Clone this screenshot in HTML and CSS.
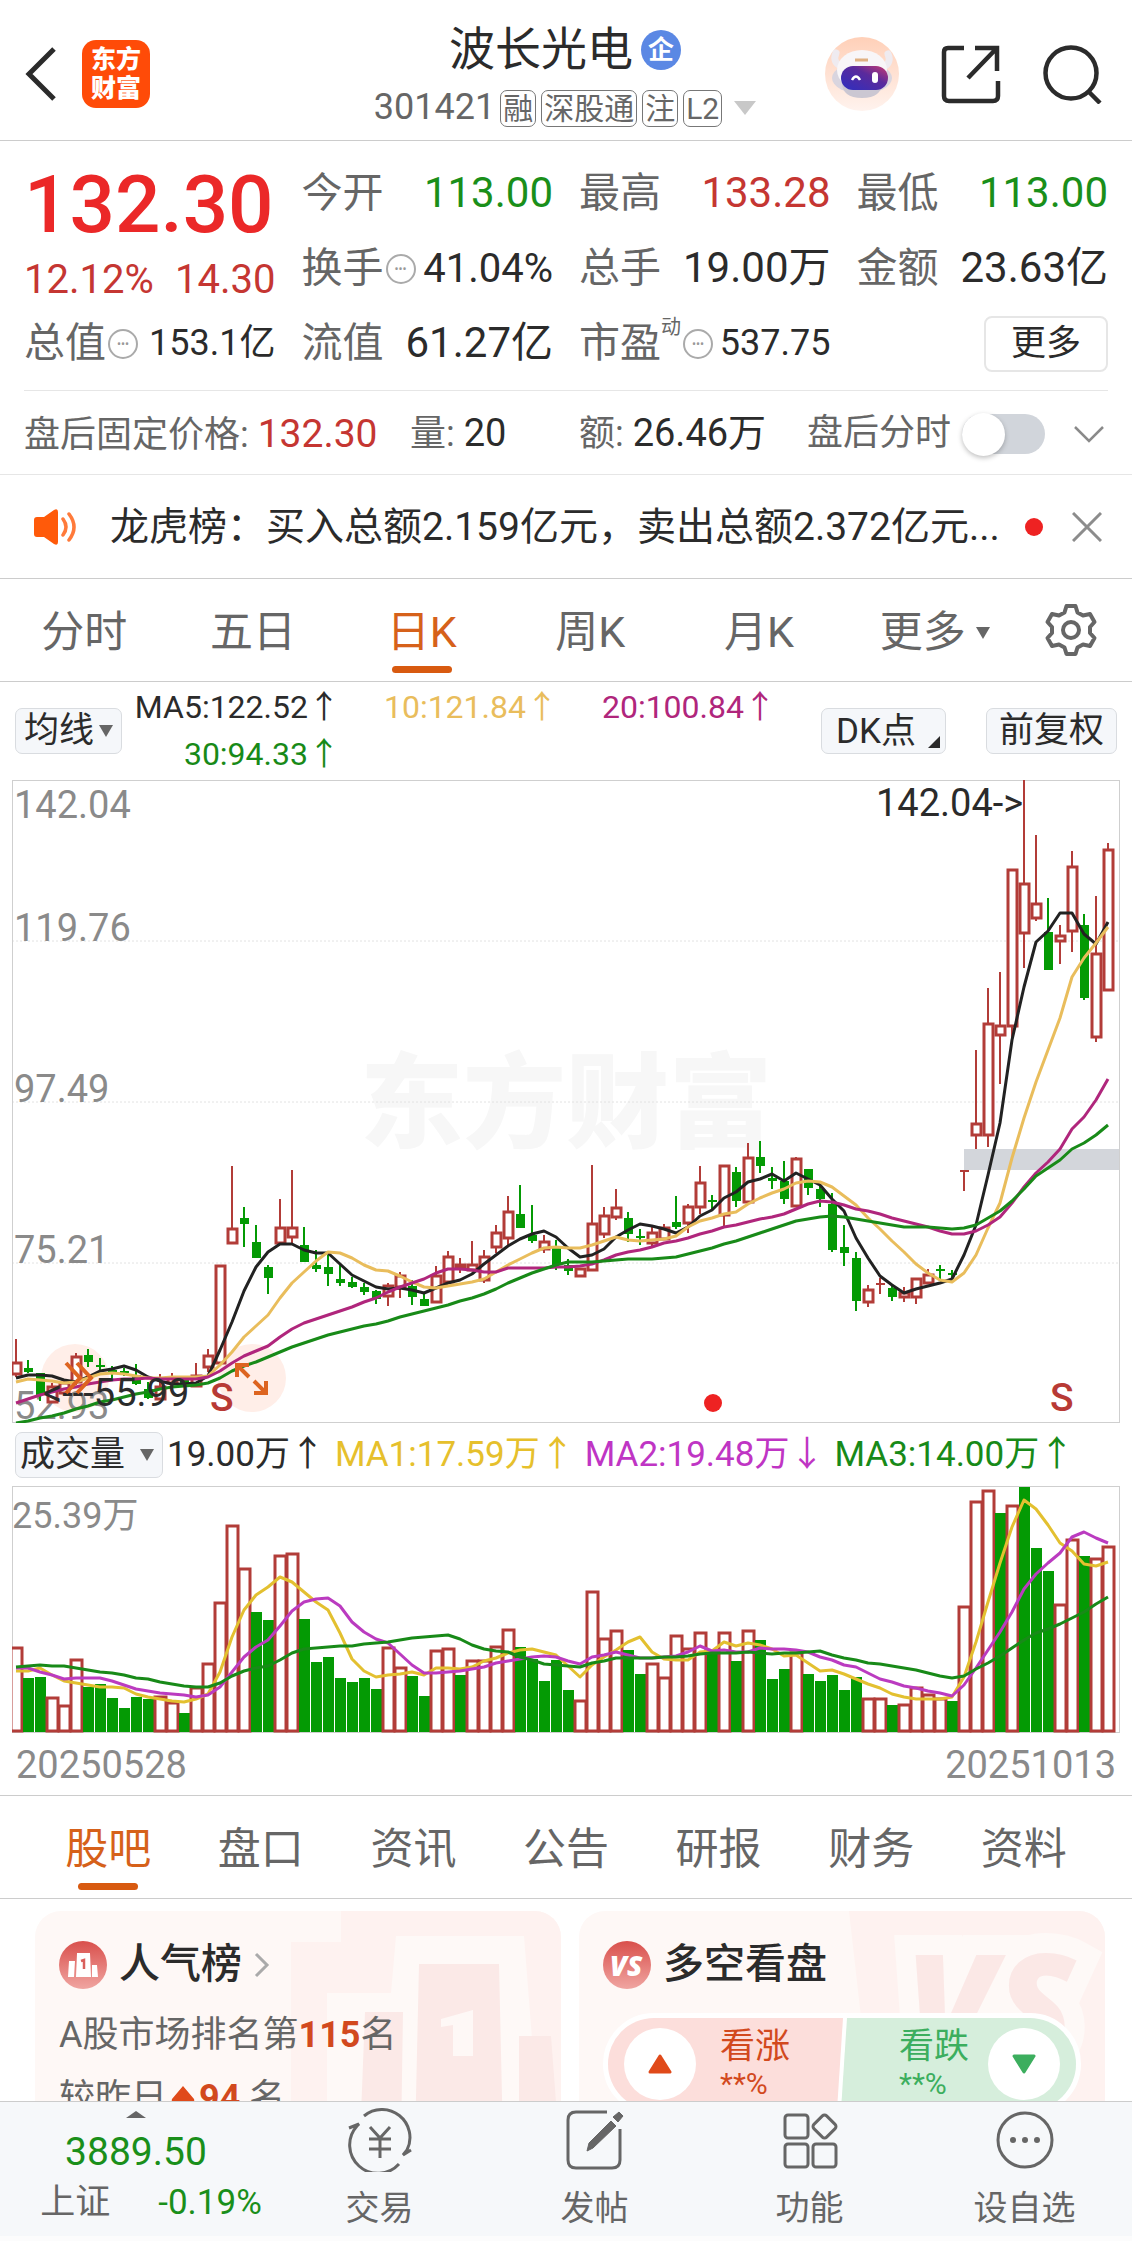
FILE: index.html
```html
<!DOCTYPE html>
<html lang="zh-CN">
<head>
    <meta charset="UTF-8">
    <meta name="viewport" content="width=device-width, initial-scale=1.0">
    <title>波长光电 301421</title>
    <link rel="stylesheet" href="styles.css">
</head>
<body>

<header class="header">
    <div class="header-side">
        <button class="icon-btn" aria-label="返回">
            <svg width="34" height="56" viewBox="0 0 34 56"><path d="M30 3 5 28l25 25" fill="none" stroke="#2b2b2b" stroke-width="5"/></svg>
        </button>
        <a class="logo" href="#"><span>东方</span><span>财富</span></a>
    </div>
    <div class="header-title">
        <h1>波长光电<span class="badge">企</span></h1>
        <div class="code">301421<span class="tag">融</span><span class="tag">深股通</span><span class="tag">注</span><span class="tag">L2</span><i class="tri tri-code"></i></div>
    </div>
    <div class="header-side header-right">
        <button class="icon-btn" aria-label="智能助手">
            <svg width="76" height="76" viewBox="0 0 76 76">
                <defs>
                    <linearGradient id="halo" x1="0" y1="0" x2="0" y2="1"><stop offset="0" stop-color="#ffd0b8"/><stop offset="1" stop-color="#fff3ee"/></linearGradient>
                    <linearGradient id="visor" x1="0" y1="1" x2="1" y2="0"><stop offset="0" stop-color="#2d2fc0"/><stop offset=".6" stop-color="#5a2a9c"/><stop offset="1" stop-color="#c83b72"/></linearGradient>
                </defs>
                <circle cx="38" cy="38" r="37" fill="url(#halo)"/>
                <path d="M12 17c-3 7 0 11 5 13M64 18c3 7 0 11-5 13" stroke="#efebf0" stroke-width="7" stroke-linecap="round" fill="none"/>
                <ellipse cx="38" cy="42" rx="30" ry="16" fill="#d9d5df"/>
                <path d="M18 46q0 16 20 16t20-16z" fill="#cbc7d2"/>
                <ellipse cx="38" cy="34" rx="25" ry="20" fill="#f8f6f8"/>
                <rect x="17" y="30" width="47" height="24" rx="12" fill="url(#visor)"/>
                <path d="M28 44q4-7 8 0" stroke="#fff" stroke-width="2.500" fill="none"/>
                <rect x="48" y="36" width="6" height="11" rx="3" fill="#fff"/>
                <path d="M31 24h13" stroke="#e0b183" stroke-width="3"/>
            </svg>
        </button>
        <button class="icon-btn" aria-label="分享">
            <svg width="60" height="60" viewBox="0 0 60 60" fill="none" stroke="#2b2b2b" stroke-width="4.500"><path d="M23 4H7q-4 0-4 4v44q0 5 5 5h44q5 0 5-5V37M34 4h22v23M55 5 27 34"/></svg>
        </button>
        <button class="icon-btn" aria-label="搜索">
            <svg width="60" height="60" viewBox="0 0 60 60" fill="none" stroke="#2b2b2b" stroke-width="4.500"><circle cx="29" cy="29" r="25.500"/><path d="m46 47 12 12"/></svg>
        </button>
    </div>
</header>

<main class="main">
    <section class="quote">
        <div class="price-cell">
            <div class="price">132.30</div>
            <div class="change"><span>12.12%</span><span>14.30</span></div>
        </div>
        <div class="cell"><span class="label">今开</span><span class="value down">113.00</span></div>
        <div class="cell"><span class="label">最高</span><span class="value up">133.28</span></div>
        <div class="cell"><span class="label">最低</span><span class="value down">113.00</span></div>
        <div class="cell"><span class="label">换手<i class="info">•••</i></span><span class="value mid">41.04%</span></div>
        <div class="cell"><span class="label">总手</span><span class="value">19.00万</span></div>
        <div class="cell"><span class="label">金额</span><span class="value">23.63亿</span></div>
        <div class="cell"><span class="label">总值<i class="info">•••</i></span><span class="value small">153.1亿</span></div>
        <div class="cell"><span class="label">流值</span><span class="value">61.27亿</span></div>
        <div class="cell"><span class="label">市盈<sup>动</sup><i class="info">•••</i></span><span class="value small">537.75</span></div>
        <div class="cell cell-end"><button class="more-btn">更多</button></div>
    </section>

    <section class="after">
        <div class="after-price">盘后固定价格: <b class="up">132.30</b></div>
        <div class="after-vol">量: <b>20</b></div>
        <div class="after-amt">额: <b>26.46万</b></div>
        <label class="after-switch">盘后分时<input type="checkbox" class="switch"></label>
        <button class="icon-btn" aria-label="展开">
            <svg width="32" height="20" viewBox="0 0 32 20"><path d="m2 3 14 14L30 3" fill="none" stroke="#8a8a8a" stroke-width="2.500"/></svg>
        </button>
    </section>

    <section class="news">
        <svg width="44" height="38" viewBox="0 0 44 38"><path d="M1 12q0-3 3-3h7L21 2q4-2 4 2v30q0 4-4 2l-10-7H4q-3 0-3-3z" fill="#ff5a0a"/><path d="M30 11q6 8 0 16M36 6q10 13 0 26" fill="none" stroke="#ff7a3a" stroke-width="3.500" stroke-linecap="round"/></svg>
        <a class="news-text" href="#">龙虎榜：买入总额2.159亿元，卖出总额2.372亿元...</a>
        <i class="dot"></i>
        <button class="icon-btn" aria-label="关闭">
            <svg width="30" height="30" viewBox="0 0 30 30"><path d="m1 1 28 28M29 1 1 29" stroke="#8c8c8c" stroke-width="3"/></svg>
        </button>
    </section>

    <nav class="period">
        <a href="#">分时</a>
        <a href="#">五日</a>
        <a href="#" class="active">日K</a>
        <a href="#">周K</a>
        <a href="#">月K</a>
        <a href="#" class="has-menu">更多<i class="tri tri-more"></i></a>
        <button class="icon-btn gear" aria-label="设置">
            <svg width="54" height="54" viewBox="0 0 54 54" fill="none" stroke="#666" stroke-width="4"><path d="M22.500 3h9l2 6.500 5.500 3 7-1.500 4.500 8-4.500 5v6l4.500 5-4.500 8-7-1.500-5.500 3-2 6.500h-9l-2-6.500-5.500-3-7 1.500-4.500-8 4.500-5v-6l-4.500-5 4.500-8 7 1.500 5.500-3z" stroke-linejoin="round"/><circle cx="27" cy="27" r="8"/></svg>
        </button>
    </nav>

    <section class="ma">
        <div class="select">
            <select aria-label="主图指标"><option>均线</option></select>
        </div>
        <div class="ma-values">
            <span class="c-black">MA5:122.52↑</span>
            <span class="c-gold">10:121.84↑</span>
            <span class="c-plum">20:100.84↑</span>
            <span class="c-green">30:94.33↑</span>
        </div>
        <button class="chip chip-dk">DK点</button>
        <button class="chip">前复权</button>
    </section>

    <svg class="chart" id="kline" viewBox="12 780 1108 643">
        <text class="watermark" x="360" y="1140">东方财富</text>
        <g class="grid">
            <path d="M12 941h1108M12 1102h1108M12 1263h1108"/>
        </g>
        <rect class="frame" x="12.500" y="780.500" width="1107" height="642"/>
        <circle class="bubble" cx="75" cy="1378" r="34"/>
        <circle class="bubble" cx="252" cy="1378" r="34"/>
        <g class="axis">
            <text x="14" y="818">142.04</text>
            <text x="14" y="941">119.76</text>
            <text x="14" y="1102">97.49</text>
            <text x="14" y="1263">75.21</text>
            <text x="14" y="1419">52.93</text>
        </g>
        <rect x="964" y="1149" width="155" height="21" fill="#d3d6db"/>
        <g id="candles"></g>
        <g id="kline-ma"></g>
        <text class="mark" x="876" y="816">142.04-&gt;</text>
        <text class="mark" x="43" y="1406">&lt;---55.99</text>
        <text class="signal" x="210" y="1411">S</text>
        <text class="signal" x="1050" y="1411">S</text>
        <circle cx="713" cy="1403" r="9" fill="#ee2222"/>
        <path class="tool" d="m66 1363 14 15-14 15M77 1363l14 15-14 15"/>
        <path class="tool" d="M237 1377v-12h12M238 1366l11 11M266 1381v12h-12M265 1392l-11-11"/>
    </svg>

    <section class="vol">
        <div class="select select-vol">
            <select aria-label="副图指标"><option>成交量</option></select>
        </div>
        <span class="c-black">19.00万↑</span>
        <span class="c-yellow">MA1:17.59万↑</span>
        <span class="c-violet">MA2:19.48万↓</span>
        <span class="c-green">MA3:14.00万↑</span>
    </section>

    <svg class="chart" id="volume" viewBox="12 1486 1108 247">
        <rect class="frame" x="12.500" y="1486.500" width="1107" height="246"/>
        <text class="axis-vol" x="12" y="1528">25.39万</text>
        <g id="bars"></g>
        <g id="volume-ma"></g>
    </svg>

    <div class="dates"><span>20250528</span><span>20251013</span></div>

    <nav class="tabs">
        <a href="#" class="active">股吧</a>
        <a href="#">盘口</a>
        <a href="#">资讯</a>
        <a href="#">公告</a>
        <a href="#">研报</a>
        <a href="#">财务</a>
        <a href="#">资料</a>
    </nav>

    <section class="cards">
        <div class="card">
            <svg class="card-bg" width="270" height="230" viewBox="0 0 270 230">
                <path d="M50 0h220v230H0V31h50z" fill="#fef2f0"/>
                <path d="M105 25h128l16 205H36V82h64z" fill="#fef9f7"/>
                <path d="M128 53h80l4 177h-88zM74 101h38l-2 129H69zM228 125h32l8 105h-40z" fill="#fbe9e7"/>
                <path d="M150 108l32-9v46h-20v-31l-12 2z" fill="#fef8f6"/>
            </svg>
            <h2>
                <svg width="48" height="48" viewBox="0 0 48 48">
                    <defs><linearGradient id="red" x1="0" y1="0" x2="0" y2="1"><stop offset="0" stop-color="#d9504c"/><stop offset="1" stop-color="#f0a5a1"/></linearGradient></defs>
                    <circle cx="24" cy="24" r="24" fill="url(#red)"/>
                    <path d="M18 12h13l1 24H17zM10 20h6l-1 16H9zM33 24h5l1 12h-6z" fill="#fff"/>
                    <path d="m22 20 3-1v9" stroke="#d9605c" stroke-width="2.500" fill="none"/>
                </svg>
                人气榜
                <svg width="16" height="26" viewBox="0 0 16 26"><path d="m2 2 11 11L2 24" fill="none" stroke="#aaa" stroke-width="3"/></svg>
            </h2>
            <p>A股市场排名第<b>115</b>名</p>
            <p>较昨日<svg width="32" height="30" viewBox="0 0 32 30"><path d="M16 2 27 15q1 3-2 3h-4v12H11V18H7q-3 0-2-3z" fill="#e04a1a"/></svg><b>94</b> 名</p>
        </div>
        <div class="card">
            <svg class="card-bg" width="256" height="230" viewBox="0 0 256 230">
                <path d="M0 0h256v230H26z" fill="#fef2f0"/>
                <text class="vs-back" x="56" y="148">VS</text>
            </svg>
            <h2>
                <svg width="48" height="48" viewBox="0 0 48 48"><circle cx="24" cy="24" r="24" fill="url(#red)"/><text class="vs-icon" x="23" y="35">VS</text></svg>
                多空看盘
            </h2>
            <div class="vote">
                <button class="vote-half vote-up">
                    <span class="vote-round"><svg width="24" height="20" viewBox="0 0 24 20"><path d="M12 2 22 18H2z" fill="#e04a1a" stroke="#e04a1a" stroke-width="3" stroke-linejoin="round"/></svg></span>
                    <span class="vote-text">看涨<small>**%</small></span>
                </button>
                <button class="vote-half vote-down">
                    <span class="vote-text">看跌<small>**%</small></span>
                    <span class="vote-round"><svg width="24" height="20" viewBox="0 0 24 20"><path d="M12 18 22 2H2z" fill="#3cae5e" stroke="#3cae5e" stroke-width="3" stroke-linejoin="round"/></svg></span>
                </button>
            </div>
        </div>
    </section>
</main>

<footer class="bottom">
    <a class="index" href="#">
        <i class="tri tri-up"></i>
        <span class="index-value">3889.50</span>
        <span class="index-row"><span>上证</span><span class="down">-0.19%</span></span>
    </a>
    <a class="action" href="#">
        <svg width="66" height="64" viewBox="0 0 66 64" fill="none" stroke="#666" stroke-width="3"><path d="M17 8a28 28 0 0 1 43 34l-4 5 8-5M52 56A28 28 0 0 1 10 18l2-2-10 4"/><path d="m23 19 10 11 10-11M33 30v20M22 31h22M22 41h22"/></svg>
        交易
    </a>
    <a class="action" href="#">
        <svg width="64" height="64" viewBox="0 0 64 64" fill="none" stroke="#666" stroke-width="3"><path d="M44 4H13q-8 0-8 8v40q0 8 8 8h36q8 0 8-8V21"/><path d="m50 9 6-5 4 4-5 6zM48 13l5 5-23 22-6 3 2-8z" fill="#666" stroke-width="1"/></svg>
        发帖
    </a>
    <a class="action" href="#">
        <svg width="64" height="64" viewBox="0 0 64 64" fill="none" stroke="#666" stroke-width="3"><rect x="7" y="7" width="23" height="23" rx="3"/><rect x="7" y="36" width="23" height="23" rx="3"/><rect x="35" y="36" width="23" height="23" rx="3"/><rect x="37.500" y="9.500" width="18" height="18" rx="3" transform="rotate(45 46.500 18.500)"/></svg>
        功能
    </a>
    <a class="action" href="#">
        <svg width="64" height="64" viewBox="0 0 64 64" fill="none" stroke="#666" stroke-width="3"><circle cx="32" cy="32" r="27"/><g fill="#666" stroke="none"><circle cx="20" cy="32" r="3"/><circle cx="32" cy="32" r="3"/><circle cx="44" cy="32" r="3"/></g></svg>
        设自选
    </a>
</footer>

<script src="chart.js"></script>
</body>
</html>
```
FILE: styles.css
```css
* {
    margin: 0;
    padding: 0;
    box-sizing: border-box;
}

body {
    display: flex;
    flex-direction: column;
    height: 100vh;
    overflow: hidden;
    font-family: Roboto, "Noto Sans CJK SC", sans-serif;
    line-height: 1.2;
    color: #2b2b2b;
    background-color: #fff;
}

a {
    color: inherit;
    text-decoration: none;
}

button, select {
    font-family: inherit;
    color: inherit;
    border: none;
    background: none;
    cursor: pointer;
}

svg {
    display: block;
    flex-shrink: 0;
}

i {
    font-style: normal;
}

.icon-btn {
    display: flex;
    flex-shrink: 0;
}

.tri {
    display: inline-block;
    border: solid transparent;
}

.up {
    color: #c53632;
}

.down {
    color: #1a8f1a;
}

.c-black { color: #2b2b2b; }
.c-gold { color: #e9bd5c; }
.c-plum { color: #b0267c; }
.c-green { color: #188a18; }
.c-yellow { color: #e6c02c; }
.c-violet { color: #bf35c4; }

/* header */
.header {
    display: flex;
    align-items: center;
    flex-shrink: 0;
    height: 141px;
    padding: 8px 30px 0 24px;
    border-bottom: 1px solid #ccc;
}

.header-side {
    display: flex;
    flex: 1;
    align-items: center;
    gap: 24px;
}

.header-right {
    justify-content: flex-end;
    gap: 41px;
}

.logo {
    display: flex;
    flex-direction: column;
    justify-content: center;
    width: 68px;
    height: 68px;
    border-radius: 14px;
    background-color: #ff4b08;
    color: #fff;
    font-size: 25px;
    font-weight: 900;
    line-height: 29px;
    text-align: center;
}

.header-title {
    padding-left: 4px;
    text-align: center;
}

.header-title h1 {
    display: flex;
    align-items: center;
    justify-content: center;
    gap: 8px;
    height: 68px;
    font-size: 46px;
    font-weight: 400;
}

.badge {
    width: 40px;
    height: 40px;
    border-radius: 50%;
    background-color: #5b88e4;
    color: #fff;
    font-size: 26px;
    font-weight: 700;
    line-height: 40px;
}

.code {
    display: flex;
    align-items: center;
    gap: 5px;
    height: 48px;
    font-size: 36px;
    color: #666;
}

.tag {
    height: 37px;
    padding: 0 2px;
    border: 1px solid #777;
    border-radius: 7px;
    font-size: 30px;
    line-height: 36px;
}

.tri-code {
    margin-left: 7px;
    border-width: 14px 11px 0;
    border-top-color: #c8c8c8;
}

.main {
    flex: 1;
    min-height: 0;
    overflow: hidden;
}

/* quote */
.quote {
    display: grid;
    grid-template-columns: repeat(4, minmax(0, 1fr));
    grid-auto-rows: 75px;
    column-gap: 26px;
    margin: 0 24px;
    padding: 15px 0 9px;
    border-bottom: 1px solid #e6e6e6;
}

.price-cell {
    grid-row: span 2;
    color: #c53632;
}

.price {
    font-size: 80px;
    font-weight: 500;
    line-height: 98px;
    color: #eb2828;
}

.change {
    display: flex;
    justify-content: space-between;
    font-size: 40px;
    line-height: 52px;
}

.cell {
    display: flex;
    align-items: center;
    justify-content: space-between;
    white-space: nowrap;
}

.cell-end {
    justify-content: flex-end;
}

.label {
    display: flex;
    align-items: center;
    font-size: 41px;
    color: #666;
}

.label sup {
    align-self: flex-start;
    font-size: 20px;
    line-height: 16px;
}

.info {
    width: 30px;
    height: 30px;
    margin-left: 2px;
    border: 2px solid #aaa;
    border-radius: 50%;
    font-size: 12px;
    line-height: 26px;
    text-align: center;
    color: #999;
}

.value {
    font-size: 42px;
}

.value.mid {
    font-size: 40px;
}

.value.small {
    font-size: 36px;
}

.more-btn {
    width: 124px;
    height: 56px;
    border: 2px solid #e6e6e6;
    border-radius: 8px;
    font-size: 35px;
    line-height: 52px;
}

/* after hours */
.after {
    display: flex;
    align-items: center;
    height: 84px;
    padding: 3px 27px 0 24px;
    border-bottom: 1px solid #e6e6e6;
    font-size: 36px;
    color: #666;
    white-space: nowrap;
}

.after b {
    font-size: 38px;
    font-weight: 400;
    color: #2b2b2b;
}

.after b.up {
    font-size: 39px;
    color: #c53632;
}

.after-price {
    flex: 386;
}

.after-vol {
    flex: 169;
}

.after-amt {
    flex: 228;
}

.after-switch {
    display: flex;
    align-items: center;
    gap: 11px;
    margin-right: 28px;
}

.switch {
    appearance: none;
    position: relative;
    width: 83px;
    height: 40px;
    border-radius: 20px;
    background-color: #d1d5db;
}

.switch::before {
    content: "";
    position: absolute;
    top: -1px;
    left: 0;
    width: 43px;
    height: 43px;
    border-radius: 50%;
    background-color: #fff;
    box-shadow: 0 2px 5px rgba(0, 0, 0, .25);
}

/* news */
.news {
    display: flex;
    align-items: center;
    height: 104px;
    padding: 0 30px 0 33px;
    border-bottom: 1px solid #ccc;
}

.news-text {
    flex: 1;
    min-width: 0;
    margin-left: 33px;
    font-size: 39px;
    line-height: 60px;
    white-space: nowrap;
    overflow: hidden;
}

.dot {
    width: 18px;
    height: 18px;
    margin: 0 29px 0 19px;
    border-radius: 50%;
    background-color: #ee2222;
}

/* tabs */
.period, .tabs {
    display: flex;
    align-items: center;
    height: 103px;
    border-bottom: 1px solid #ccc;
    font-size: 43px;
    color: #666;
}

.period a, .tabs a {
    position: relative;
    flex: 1;
    padding-top: 4px;
    line-height: 98px;
    text-align: center;
}

.period .active, .tabs .active {
    color: #d6611a;
}

.active::after {
    content: "";
    position: absolute;
    left: 50%;
    bottom: 8px;
    width: 60px;
    height: 7px;
    margin-left: -30px;
    border-radius: 4px;
    background-color: #d85a10;
}

.period .has-menu {
    text-indent: 14px;
}

.tri-more {
    margin: 0 0 8px 10px;
    border-width: 12px 7px 0;
    border-top-color: #666;
}

.gear {
    width: 120px;
    padding-left: 32px;
}

.tabs {
    height: 104px;
    padding: 0 32px;
    border-top: 1px solid #ccc;
}

/* indicator row */
.ma {
    display: flex;
    align-items: center;
    height: 98px;
    padding: 0 15px;
}

.select {
    position: relative;
    flex-shrink: 0;
}

.select select {
    appearance: none;
    height: 46px;
    padding: 0 26px 0 8px;
    border: 1px solid #d9dce0;
    border-radius: 7px;
    background-color: #f5f7fa;
    font-size: 35px;
    line-height: 42px;
}

.select::after {
    content: "";
    position: absolute;
    top: 17px;
    right: 9px;
    border: solid transparent;
    border-width: 12px 7px 0;
    border-top-color: #666;
    pointer-events: none;
}

.select-vol select {
    padding: 0 36px 0 4px;
}

.ma-values {
    display: grid;
    grid-template-columns: repeat(3, 218px);
    flex: 1;
    font-size: 32px;
    line-height: 47px;
    text-align: right;
}

.chip {
    height: 46px;
    padding: 0 12px;
    margin-left: 40px;
    border: 1px solid #d9dce0;
    border-radius: 7px;
    background-color: #f5f7fa;
    font-size: 35px;
    line-height: 42px;
    white-space: nowrap;
}

.chip-dk {
    display: flex;
    align-items: flex-end;
    gap: 12px;
    padding: 0 5px 0 14px;
}

.chip-dk::after {
    content: "";
    margin-bottom: 5px;
    border: solid transparent;
    border-width: 0 0 12px 12px;
    border-bottom-color: #2b2b2b;
}

.vol {
    display: flex;
    align-items: center;
    gap: 4px;
    height: 63px;
    padding: 0 15px;
    font-size: 35px;
    white-space: nowrap;
}

.vol span + span {
    margin-left: 6px;
}

.dates {
    display: flex;
    justify-content: space-between;
    height: 62px;
    padding: 0 16px;
    font-size: 38px;
    line-height: 64px;
    color: #8a8a8a;
}

/* charts */
.chart {
    width: calc(100% - 24px);
    margin: 0 12px;
}

.frame {
    fill: none;
    stroke: #cfcfcf;
    stroke-width: 1;
}

.grid path {
    fill: none;
    stroke: #e2e2e2;
    stroke-width: 1;
    stroke-dasharray: 2 2;
}

.watermark {
    font-size: 103px;
    font-weight: 900;
    fill: #f7f7f7;
}

.axis {
    font-size: 38px;
    fill: #8a8a8a;
}

.axis-vol {
    font-size: 36px;
    fill: #8a8a8a;
}

.mark {
    font-size: 38px;
    fill: #2b2b2b;
}

.signal {
    font-size: 39px;
    font-weight: 500;
    fill: #b83a35;
}

.bubble {
    fill: #ffeee8;
}

.tool {
    fill: none;
    stroke: #dd6420;
    stroke-width: 4;
}

.rise {
    fill: #fff;
    stroke: #b23c38;
    stroke-width: 3;
}

.fall {
    fill: #049a04;
    stroke: none;
}

.wick-rise {
    stroke: #b23c38;
    stroke-width: 2;
}

.wick-fall {
    stroke: #049a04;
    stroke-width: 2;
}

.line {
    fill: none;
    stroke-width: 3;
    stroke-linejoin: round;
}

/* cards */
.cards {
    display: grid;
    grid-template-columns: 1fr 1fr;
    gap: 18px;
    padding: 12px 27px 0 35px;
}

.card {
    position: relative;
    height: 260px;
    padding: 24px 24px 0;
    border-radius: 26px;
    background-color: #fef8f6;
    overflow: hidden;
}

.card-bg {
    position: absolute;
    top: 0;
    right: 0;
}

.card h2 {
    position: relative;
    display: flex;
    align-items: center;
    gap: 12px;
    height: 60px;
    font-size: 41px;
    font-weight: 500;
}

.card p {
    position: relative;
    display: flex;
    align-items: center;
    height: 63px;
    font-size: 36px;
    color: #666;
    white-space: pre;
}

.card h2 + p {
    margin-top: 9px;
}

.card b {
    color: #d2491e;
    font-weight: 700;
}

.vs-back, .vs-icon {
    font-family: "Open Sans", sans-serif;
    font-weight: 800;
    font-style: italic;
}

.vs-back {
    font-size: 146px;
    fill: #fbe8e6;
    stroke: #fef9f7;
    stroke-width: 40px;
    paint-order: stroke;
}

.vs-icon {
    font-size: 28px;
    fill: #fff;
    text-anchor: middle;
}

.vote {
    position: relative;
    display: flex;
    height: 102px;
    margin-top: 18px;
    border: 5px solid #fff;
    border-radius: 51px;
    background-color: #fff;
    overflow: hidden;
}

.vote-half {
    display: flex;
    flex: 1;
    align-items: center;
    justify-content: space-between;
    padding: 0 16px;
    text-align: left;
}

.vote-up {
    justify-content: flex-start;
    gap: 24px;
    margin-right: -2px;
    background-color: #fcdedb;
    color: #d2491e;
    clip-path: polygon(0 0, 100% 0, calc(100% - 6px) 100%, 0 100%);
}

.vote-down {
    justify-content: flex-end;
    gap: 19px;
    background-color: #d6eedc;
    color: #3cae5e;
    clip-path: polygon(6px 0, 100% 0, 100% 100%, 0 100%);
}

.vote-round {
    display: flex;
    align-items: center;
    justify-content: center;
    width: 72px;
    height: 72px;
    border-radius: 50%;
    background-color: #fff;
}

.vote-text {
    font-size: 35px;
    line-height: 40px;
}

.vote-text small {
    display: block;
    font-size: 30px;
    line-height: 34px;
}

/* bottom bar */
.bottom {
    display: flex;
    flex-shrink: 0;
    height: 140px;
    border-top: 1px solid #ccc;
    border-bottom: 5px solid #fcfcfc;
    background-color: #f6f8fa;
    color: #666;
}

.index {
    display: flex;
    flex-direction: column;
    align-items: center;
    width: 272px;
    padding-top: 9px;
}

.tri-up {
    border-width: 0 10px 7px;
    border-bottom-color: #666;
}

.index-value {
    margin-top: 8px;
    font-size: 39px;
    line-height: 52px;
    color: #1a8f1a;
}

.index-row {
    display: flex;
    gap: 48px;
    padding-left: 30px;
    font-size: 35px;
    line-height: 50px;
}

.action {
    display: flex;
    flex: 1;
    flex-direction: column;
    align-items: center;
    gap: 16px;
    padding-top: 6px;
    font-size: 34px;
    line-height: 40px;
}
```
FILE: chart.js
```js
const SVG_NS = 'http://www.w3.org/2000/svg';
const STEP = 12;
const START = 16;
const VOLUME_BASE = 1731;

// direction, body top, body bottom, high, low
const candles = [
    ['r', 1363, 1374, 1339, 1377], ['g', 1368, 1372, 1360, 1373], ['g', 1373, 1395, 1373, 1401], ['r', 1387, 1402, 1383, 1402],
    ['r', 1383, 1393, 1380, 1395], ['r', 1357, 1382, 1353, 1385], ['g', 1355, 1362, 1349, 1367], ['g', 1366, 1368, 1358, 1372],
    ['g', 1371, 1373, 1366, 1378], ['g', 1372, 1374, 1368, 1376], ['g', 1375, 1384, 1364, 1385], ['g', 1389, 1398, 1382, 1399],
    ['r', 1387, 1399, 1374, 1400], ['r', 1378, 1383, 1373, 1386], ['g', 1380, 1383, 1377, 1386], ['r', 1376, 1386, 1363, 1386],
    ['r', 1356, 1367, 1349, 1372], ['r', 1266, 1363, 1266, 1363], ['r', 1229, 1243, 1166, 1243], ['g', 1218, 1224, 1207, 1247],
    ['g', 1242, 1258, 1225, 1258], ['g', 1267, 1278, 1265, 1294], ['r', 1228, 1243, 1199, 1243], ['r', 1228, 1237, 1170, 1243],
    ['g', 1245, 1262, 1227, 1262], ['g', 1265, 1269, 1250, 1272], ['g', 1267, 1274, 1255, 1286], ['g', 1279, 1283, 1263, 1286],
    ['g', 1282, 1287, 1277, 1288], ['g', 1287, 1292, 1283, 1295], ['g', 1291, 1299, 1290, 1304], ['r', 1286, 1296, 1283, 1306],
    ['r', 1276, 1287, 1272, 1298], ['g', 1286, 1297, 1280, 1305], ['g', 1299, 1306, 1294, 1306], ['r', 1276, 1302, 1266, 1302],
    ['r', 1257, 1282, 1251, 1282], ['r', 1265, 1268, 1258, 1273], ['r', 1265, 1270, 1241, 1270], ['r', 1257, 1280, 1250, 1283],
    ['r', 1233, 1247, 1225, 1253], ['r', 1212, 1238, 1196, 1247], ['g', 1214, 1228, 1185, 1228], ['g', 1235, 1241, 1205, 1243],
    ['r', 1242, 1249, 1235, 1253], ['g', 1247, 1265, 1240, 1270], ['g', 1265, 1271, 1259, 1275], ['r', 1269, 1276, 1268, 1276],
    ['r', 1224, 1270, 1165, 1270], ['r', 1216, 1234, 1207, 1238], ['r', 1208, 1217, 1189, 1220], ['g', 1218, 1234, 1212, 1242],
    ['g', 1237, 1239, 1229, 1245], ['r', 1233, 1243, 1227, 1248], ['r', 1228, 1239, 1224, 1239], ['g', 1222, 1227, 1196, 1229],
    ['r', 1207, 1223, 1204, 1233], ['r', 1183, 1207, 1166, 1214], ['g', 1201, 1203, 1195, 1209], ['r', 1166, 1215, 1166, 1227],
    ['g', 1172, 1201, 1167, 1207], ['r', 1158, 1202, 1143, 1202], ['g', 1157, 1166, 1141, 1173], ['g', 1178, 1181, 1167, 1189],
    ['g', 1181, 1199, 1161, 1204], ['r', 1159, 1206, 1157, 1206], ['g', 1169, 1188, 1169, 1195], ['g', 1189, 1199, 1185, 1207],
    ['g', 1204, 1250, 1193, 1252], ['g', 1247, 1253, 1225, 1266], ['g', 1258, 1301, 1252, 1311], ['r', 1290, 1302, 1285, 1307],
    ['r', 1284, 1285, 1278, 1294], ['g', 1288, 1297, 1286, 1301], ['r', 1293, 1297, 1287, 1302], ['r', 1279, 1297, 1279, 1304],
    ['r', 1275, 1283, 1269, 1283], ['g', 1270, 1272, 1265, 1280], ['g', 1274, 1276, 1270, 1280], ['r', 1171, 1171, 1171, 1191],
    ['r', 1124, 1135, 1050, 1149], ['r', 1024, 1135, 988, 1147], ['r', 1026, 1035, 972, 1084], ['r', 870, 1026, 870, 1040],
    ['r', 884, 933, 780, 968], ['r', 904, 918, 835, 921], ['g', 932, 970, 898, 970], ['r', 936, 941, 925, 964],
    ['r', 867, 931, 851, 952], ['g', 925, 998, 914, 1000], ['r', 954, 1037, 896, 1042], ['r', 850, 990, 843, 990]
];

const volumeDirs = 'rggrrrggggggrrgrrrrrggrrggggggg' + 'rrggrrgrrrrgggggrrrrggrrrrrgrgrgggrgggggrrgrrrrgrrrgrgggrrgrr';

const volumeTops = [
    1648, 1678, 1677, 1698, 1706, 1660, 1687, 1684, 1698, 1708,
    1697, 1699, 1697, 1703, 1713, 1688, 1664, 1603, 1526, 1569,
    1612, 1620, 1556, 1554, 1619, 1662, 1657, 1678, 1682, 1678,
    1689, 1648, 1668, 1676, 1696, 1651, 1649, 1675, 1661, 1661,
    1647, 1630, 1647, 1659, 1681, 1660, 1690, 1701, 1592, 1639,
    1631, 1650, 1674, 1664, 1678, 1636, 1649, 1633, 1653, 1633,
    1661, 1631, 1640, 1679, 1669, 1653, 1674, 1681, 1675, 1690,
    1677, 1699, 1699, 1705, 1705, 1688, 1695, 1699, 1701, 1607,
    1502, 1491, 1513, 1506, 1487, 1548, 1571, 1605, 1540, 1556, 1559, 1547
];

const klineLines = {
    '#222': [
        1378, 1375, 1375, 1376, 1380, 1382, 1377, 1371, 1369, 1366,
        1370, 1377, 1381, 1384, 1384, 1383, 1376, 1350, 1322, 1291,
        1267, 1252, 1244, 1244, 1250, 1253, 1253, 1264, 1275, 1281,
        1287, 1289, 1288, 1290, 1293, 1288, 1283, 1280, 1274, 1264,
        1255, 1246, 1239, 1234, 1231, 1237, 1248, 1257, 1255, 1249,
        1237, 1230, 1224, 1226, 1229, 1233, 1227, 1216, 1210, 1198,
        1192, 1182, 1179, 1174, 1181, 1173, 1179, 1185, 1199, 1211,
        1238, 1258, 1276, 1285, 1293, 1289, 1286, 1283, 1279, 1255,
        1225, 1175, 1123, 1040, 987, 942, 931, 913, 913, 934, 944, 922
    ],
    '#e9bd5c': [
        1382, 1379, 1380, 1381, 1383, 1382, 1378, 1374, 1373, 1374,
        1376, 1378, 1378, 1377, 1377, 1377, 1376, 1365, 1352, 1337,
        1326, 1315, 1298, 1283, 1272, 1261, 1252, 1253, 1258, 1265,
        1270, 1271, 1276, 1282, 1287, 1288, 1286, 1284, 1282, 1279,
        1272, 1265, 1259, 1253, 1248, 1247, 1248, 1248, 1245, 1241,
        1237, 1240, 1241, 1240, 1239, 1236, 1227, 1221, 1218, 1214,
        1212, 1204, 1198, 1193, 1189, 1183, 1181, 1182, 1187, 1196,
        1205, 1218, 1229, 1241, 1252, 1264, 1273, 1280, 1282, 1273,
        1255, 1228, 1203, 1158, 1118, 1082, 1050, 1018, 977, 958, 943, 927
    ],
    '#b0267c': [
        1403, 1399, 1395, 1392, 1389, 1387, 1384, 1382, 1380, 1379,
        1379, 1378, 1379, 1379, 1379, 1379, 1377, 1371, 1363, 1356,
        1351, 1346, 1337, 1329, 1323, 1319, 1315, 1311, 1307, 1302,
        1298, 1292, 1287, 1283, 1279, 1273, 1269, 1269, 1270, 1272,
        1272, 1268, 1268, 1268, 1268, 1267, 1267, 1266, 1264, 1260,
        1255, 1252, 1250, 1247, 1243, 1241, 1238, 1234, 1231, 1227,
        1225, 1222, 1219, 1217, 1214, 1209, 1204, 1201, 1202, 1205,
        1209, 1211, 1214, 1218, 1221, 1224, 1227, 1231, 1234, 1234,
        1231, 1225, 1217, 1203, 1187, 1173, 1162, 1149, 1129, 1117, 1100, 1079
    ],
    '#188a18': [
        1423, 1421, 1418, 1416, 1413, 1409, 1406, 1402, 1400, 1397,
        1394, 1392, 1389, 1387, 1386, 1385, 1383, 1378, 1371, 1366,
        1362, 1357, 1352, 1347, 1343, 1339, 1335, 1332, 1329, 1326,
        1324, 1321, 1317, 1314, 1311, 1308, 1305, 1301, 1298, 1294,
        1289, 1283, 1278, 1273, 1269, 1265, 1262, 1262, 1262, 1261,
        1260, 1259, 1259, 1259, 1258, 1257, 1254, 1251, 1248, 1244,
        1241, 1237, 1233, 1229, 1225, 1221, 1219, 1217, 1216, 1217,
        1219, 1221, 1223, 1225, 1227, 1227, 1227, 1228, 1229, 1228,
        1225, 1218, 1211, 1201, 1189, 1176, 1168, 1160, 1149, 1143, 1135, 1125
    ]
};

const volumeLines = {
    '#e3c030': [
        1671, 1671, 1668, 1675, 1681, 1683, 1685, 1687, 1687, 1688,
        1694, 1697, 1699, 1701, 1702, 1699, 1694, 1672, 1637, 1610,
        1595, 1587, 1577, 1582, 1592, 1602, 1610, 1633, 1659, 1671,
        1677, 1675, 1674, 1672, 1675, 1668, 1668, 1669, 1667, 1661,
        1658, 1653, 1650, 1649, 1652, 1655, 1666, 1677, 1665, 1657,
        1650, 1642, 1637, 1652, 1659, 1660, 1660, 1652, 1651, 1642,
        1646, 1643, 1645, 1649, 1656, 1655, 1663, 1671, 1670, 1674,
        1679, 1684, 1688, 1694, 1697, 1699, 1699, 1699, 1697, 1677,
        1642, 1602, 1563, 1527, 1500, 1509, 1525, 1543, 1551, 1564, 1566, 1562
    ],
    '#bb3bc0': [
        1668, 1668, 1672, 1675, 1679, 1678, 1678, 1678, 1681, 1685,
        1689, 1691, 1693, 1694, 1695, 1697, 1695, 1687, 1672, 1657,
        1647, 1640, 1626, 1611, 1602, 1599, 1598, 1606, 1622, 1632,
        1639, 1643, 1654, 1665, 1673, 1673, 1672, 1671, 1669, 1667,
        1663, 1661, 1659, 1657, 1656, 1657, 1661, 1664, 1657, 1655,
        1652, 1655, 1658, 1658, 1657, 1656, 1652, 1646, 1651, 1650,
        1652, 1652, 1648, 1649, 1649, 1650, 1652, 1657, 1660, 1665,
        1667, 1673, 1679, 1682, 1686, 1688, 1691, 1693, 1696, 1685,
        1668, 1650, 1632, 1612, 1589, 1574, 1563, 1553, 1537, 1532, 1538, 1543
    ],
    '#188a18': [
        1667, 1666, 1665, 1666, 1666, 1668, 1670, 1672, 1673, 1675,
        1678, 1679, 1682, 1684, 1686, 1687, 1687, 1683, 1676, 1671,
        1668, 1666, 1660, 1653, 1649, 1648, 1647, 1646, 1646, 1644,
        1643, 1642, 1640, 1638, 1637, 1636, 1635, 1639, 1645, 1649,
        1651, 1652, 1657, 1660, 1664, 1665, 1666, 1667, 1663, 1661,
        1658, 1658, 1658, 1658, 1657, 1657, 1656, 1654, 1653, 1653,
        1653, 1652, 1653, 1654, 1653, 1653, 1652, 1651, 1655, 1658,
        1660, 1663, 1664, 1666, 1668, 1670, 1673, 1676, 1678, 1676,
        1669, 1663, 1656, 1648, 1640, 1633, 1629, 1624, 1618, 1612, 1604, 1597
    ]
};

function add(parent, tag, attrs) {
    const el = document.createElementNS(SVG_NS, tag);
    Object.keys(attrs).forEach(key => el.setAttribute(key, attrs[key]));
    parent.appendChild(el);
}

function drawCandles() {
    const group = document.getElementById('candles');
    candles.forEach(([dir, top, bottom, high, low], i) => {
        const x = START + i * STEP;
        const rise = dir === 'r';
        const wick = rise ? 'wick-rise' : 'wick-fall';
        if (bottom - top < 3) {
            add(group, 'path', { class: wick, d: `M${x - 4} ${top}h9M${x} ${high}V${low}` });
            return;
        }
        add(group, 'path', { class: wick, d: `M${x} ${high}V${top}M${x} ${bottom}V${low}` });
        add(group, 'rect', rise
            ? { class: 'rise', x: x - 4, y: top, width: 9, height: bottom - top }
            : { class: 'fall', x: x - 4, y: top, width: 9, height: bottom - top });
    });
}

function drawBars() {
    const group = document.getElementById('bars');
    volumeTops.forEach((top, i) => {
        const x = START + i * STEP;
        add(group, 'rect', volumeDirs[i] === 'r'
            ? { class: 'rise', x: x - 5, y: top, width: 11, height: VOLUME_BASE - top }
            : { class: 'fall', x: x - 5, y: top, width: 11, height: VOLUME_BASE + 1 - top });
    });
}

function drawLines(id, lines) {
    const group = document.getElementById(id);
    Object.keys(lines).forEach(color => {
        const points = lines[color].map((y, i) => `${START + i * STEP},${y}`).join(' ');
        add(group, 'polyline', { class: 'line', stroke: color, points });
    });
}

drawCandles();
drawBars();
drawLines('kline-ma', klineLines);
drawLines('volume-ma', volumeLines);
```
